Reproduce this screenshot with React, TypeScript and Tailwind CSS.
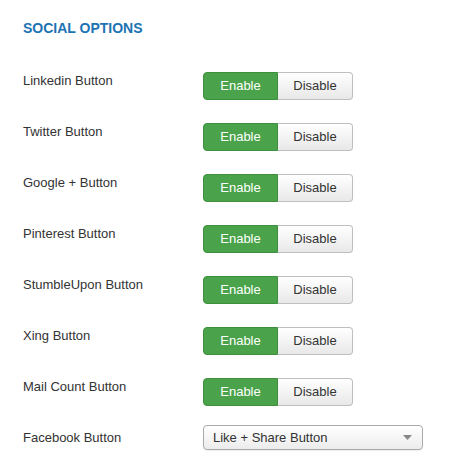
import React from 'react';

const toggles = [
  'Linkedin Button',
  'Twitter Button',
  'Google + Button',
  'Pinterest Button',
  'StumbleUpon Button',
  'Xing Button',
  'Mail Count Button',
];

const YesNo = () => (
  <div className="flex h-[28px] text-[13px]">
    <button className="w-[75px] rounded-l-[4px] border border-[#3d8f3d] bg-[#4aa34a] text-white">
      Enable
    </button>
    <button className="w-[75px] rounded-r-[4px] border border-l-0 border-[#bfbfbf] bg-gradient-to-b from-white to-[#e8e8e8] text-[#333]">
      Disable
    </button>
  </div>
);

const SocialOptions = () => {
  return (
    <div
      className="min-h-[474px] w-[465px] bg-white pl-[23px] pt-[18px] text-[#333]"
      style={{ fontFamily: '"Liberation Sans", Arial, sans-serif' }}
    >
      <h3 className="text-[14px] font-bold leading-[20px] text-[#1c73b3]">SOCIAL OPTIONS</h3>

      <div className="mt-[34px] flex flex-col gap-[23px]">
        {toggles.map((label) => (
          <div key={label} className="flex items-start">
            <div className="w-[180px] text-[13px] leading-[18px]">{label}</div>
            <YesNo />
          </div>
        ))}

        <div className="mt-[-4px] flex items-start">
          <div className="w-[180px] pt-[4px] text-[13px] leading-[18px]">Facebook Button</div>
          <div className="flex h-[25px] w-[220px] items-center justify-between rounded-[4px] border border-[#aaa] bg-gradient-to-b from-white to-[#ececec] pl-[9px] pr-[10px] text-[13px] shadow-[0_1px_1px_rgba(0,0,0,0.08)]">
            <span>Like + Share Button</span>
            <svg width="9" height="5" viewBox="0 0 9 5">
              <polygon points="0,0 9,0 4.5,5" fill="#888" />
            </svg>
          </div>
        </div>
      </div>
    </div>
  );
};

export default SocialOptions;
